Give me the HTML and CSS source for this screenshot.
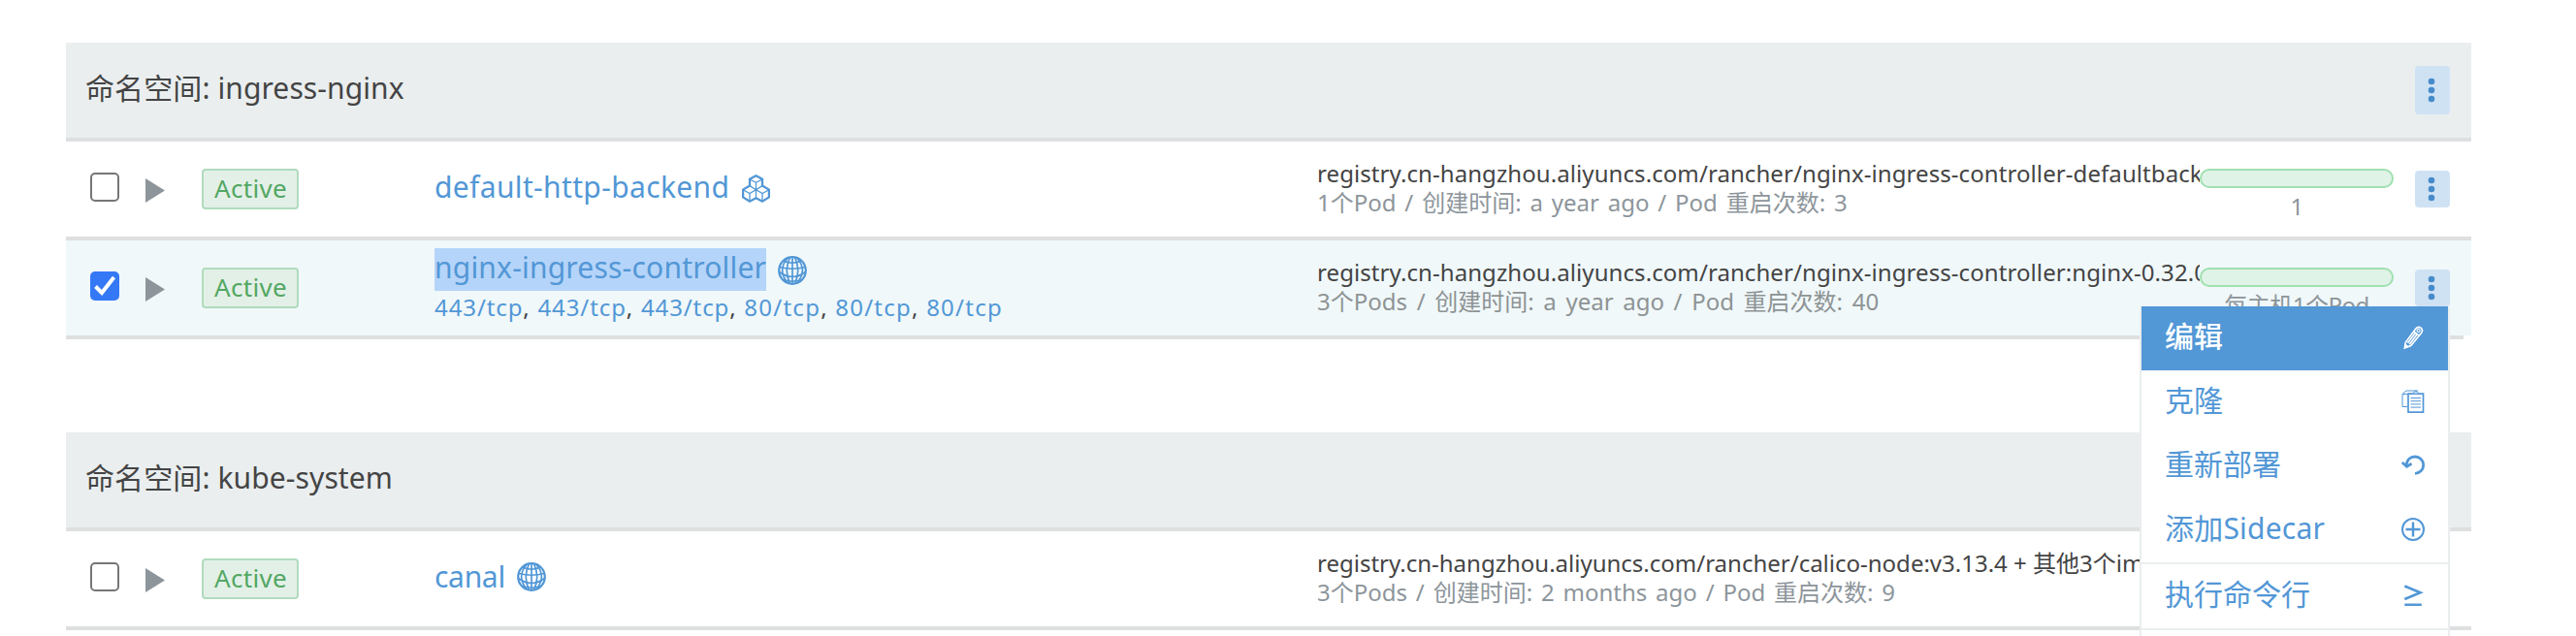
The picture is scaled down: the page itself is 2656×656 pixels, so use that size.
FILE: index.html
```html
<!DOCTYPE html>
<html lang="zh-CN">
<head>
<meta charset="utf-8">
<title>Workloads</title>
<link rel="stylesheet" href="styles.css">
</head>
<body>
<svg class="defs" aria-hidden="true">
  <symbol id="dots" viewBox="0 0 8 26"><circle cx="4" cy="4" r="3.3"/><circle cx="4" cy="13" r="3.3"/><circle cx="4" cy="22" r="3.3"/></symbol>
  <symbol id="globe" viewBox="0 0 30 30">
    <g fill="none" stroke="currentColor" stroke-width="1.7">
      <circle cx="15" cy="15" r="13.8" stroke-width="2.2"/>
      <path d="M12.5 1.500Q6 15 12.500 28.500M17.500 1.500Q24 15 17.500 28.500"/>
      <path d="M10 2.500Q-.500 14 9.500 27M20 2.500Q30.500 14 20.500 27"/>
      <path d="M15 1v28M6 5Q15 9.500 24 5M2 11.500Q15 15 28 11.500M1.500 16.500Q15 26.500 28.500 16.500M5.500 24.500Q15 28 24.500 24.500"/>
    </g>
  </symbol>
  <symbol id="cubes" viewBox="0 0 29 29">
    <path fill="none" stroke="currentColor" stroke-width="2.3" d="M14.5 1.3 21 4.8V11.6L27.9 15.6V23.4L21 27.7 14.5 24.2 8 27.7 1.1 23.4V15.6L8 11.6V4.8Z"/>
    <path fill="none" stroke="currentColor" stroke-width="1.3" d="M8 5 14.5 8.3 21 5M14.5 8.3V24M8 11.6 14.5 15.7 21 11.6M1.1 15.8 8 19.6 14.5 15.7 21 19.6 27.9 15.8M8 19.6V27M21 19.6V27"/>
  </symbol>
</svg>
<main class="page">
  <section class="group">
    <header class="group-head">
      <h2 class="group-title">命名空间: ingress-nginx</h2>
      <button class="more more-tall"><svg class="dots"><use href="#dots"/></svg></button>
    </header>
    <div class="rule"></div>
    <div class="row">
      <div class="select"><span class="check"></span><span class="arrow"></span></div>
      <div class="state"><span class="badge">Active</span></div>
      <div class="name single"><a class="link loose">default-http-backend</a><svg class="kind cubes"><use href="#cubes"/></svg></div>
      <div class="image"><p class="path">registry.cn-hangzhou.aliyuncs.com/rancher/nginx-ingress-controller-defaultbackend</p><p class="meta">1个Pod / 创建时间: a year ago / Pod 重启次数: 3</p></div>
      <div class="scale"><div class="bar"></div><p class="count">1</p></div>
      <div class="actions"><button class="more"><svg class="dots"><use href="#dots"/></svg></button></div>
    </div>
    <div class="rule"></div>
    <div class="row selected">
      <div class="select"><span class="check checked"><svg class="tick" viewBox="0 0 30 30"><path fill="none" stroke="#fff" stroke-width="4" d="M5.5 15.5 12 22 24.5 6"/></svg></span><span class="arrow"></span></div>
      <div class="state"><span class="badge">Active</span></div>
      <div class="name"><div class="name-line"><a class="link marked">nginx-ingress-controller</a><svg class="kind"><use href="#globe"/></svg></div>
        <p class="ports"><a>443/tcp</a>, <a>443/tcp</a>, <a>443/tcp</a>, <a class="short">80/tcp</a>, <a class="short">80/tcp</a>, <a class="short">80/tcp</a></p></div>
      <div class="image"><p class="path">registry.cn-hangzhou.aliyuncs.com/rancher/nginx-ingress-controller:nginx-0.32.0</p><p class="meta meta-wide">3个Pods / 创建时间: a year ago / Pod 重启次数: 40</p></div>
      <div class="scale"><div class="bar"></div><p class="count">每主机1个Pod</p></div>
      <div class="actions"><button class="more"><svg class="dots"><use href="#dots"/></svg></button>
        <ul class="menu">
          <li class="item active"><span>编辑</span>
            <svg class="icon" viewBox="0 0 24 24"><path d="M3.3 23 4.2 17.2 14.6 3.2Q17.2 0 20 2.2T20.500 7.500L9.800 20.500Z" fill="none" stroke="#fff" stroke-width="1.600"/><path d="M3 23.400 3.800 18.500 8 21.500Z" fill="#fff"/><path d="M12.500 6 18.300 10.200M6.500 17.800 14.200 7.500M8.300 19.200 16 9" stroke="#fff" stroke-width="1.600" fill="none"/><circle cx="17.600" cy="5" r="1.500" fill="none" stroke="#fff" stroke-width="1.200"/></svg></li>
          <li class="item"><span>克隆</span>
            <svg class="icon" viewBox="0 0 24 24" fill="none" stroke="currentColor"><path d="M6 17.500H1V4.500L5 1H17" stroke-width="1"/><path d="M1 4.500H6" stroke-width="1"/><path d="M7 4.200H22.500V23.200H7Z" stroke-width="1.700"/><path d="M11 4.500 12.800 2.800Q14.800-.500 16.800 2.800L18.600 4.500Z" stroke-width="1" fill="#b5d3ef"/><path d="M9.500 8.500H20M9.500 11.700H20M9.500 14.900H20M9.500 18.100H20" stroke-width="1"/></svg></li>
          <li class="item"><span>重新部署</span>
            <svg class="icon" viewBox="0 0 24 24" fill="none" stroke="currentColor"><path d="M5 12.500C5.500 6 9.500 3 14 3A8.600 8.600 0 0 1 14 20.300" stroke-width="2.800"/><path d="M.800 9 5.500 13.300 10.500 10.300" stroke-width="2.800"/></svg></li>
          <li class="item"><span class="mixed">添加Sidecar</span>
            <svg class="icon" viewBox="0 0 24 24" fill="none" stroke="currentColor" stroke-width="2"><circle cx="12" cy="12" r="11"/><path d="M12 4.500V19.500M4.500 12H19.500" stroke-width="2.400"/></svg></li>
          <li class="divider"></li>
          <li class="item"><span>执行命令行</span>
            <svg class="icon" viewBox="0 0 24 24" fill="none" stroke="currentColor" stroke-width="2.600"><path d="M3.300 2.500 19.500 9.300 3.300 16M3.300 21.800H20.800"/></svg></li>
          <li class="divider"></li>
        </ul>
      </div>
    </div>
    <div class="rule rule-short"></div>
  </section>
  <section class="group">
    <header class="group-head">
      <h2 class="group-title">命名空间: kube-system</h2>
    </header>
    <div class="rule"></div>
    <div class="row">
      <div class="select"><span class="check"></span><span class="arrow"></span></div>
      <div class="state"><span class="badge">Active</span></div>
      <div class="name single"><a class="link tight">canal</a><svg class="kind"><use href="#globe"/></svg></div>
      <div class="image"><p class="path plain">registry.cn-hangzhou.aliyuncs.com/rancher/calico-node:v3.13.4 + 其他3个images</p><p class="meta">3个Pods / 创建时间: 2 months ago / Pod 重启次数: 9</p></div>
    </div>
    <div class="rule"></div>
  </section>
</main>
</body>
</html>
```
FILE: styles.css
```css
* { box-sizing: border-box; margin: 0; padding: 0; }
html, body { height: 656px; overflow: hidden; }
body {
  background: #fff;
  color: #444;
  font: 24px/30px "Noto Sans", "Noto Sans CJK SC", sans-serif;
}
.defs { position: absolute; width: 0; height: 0; }
.page { display: flex; flex-direction: column; gap: 96px; padding: 44px 108px 0 68px; }

.group-head {
  display: flex;
  align-items: center;
  justify-content: space-between;
  height: 98px;
  padding: 0 22px 0 20px;
  background: #eaeeef;
}
.group-title { font-size: 30px; font-weight: 400; line-height: 40px; letter-spacing: .1px; padding-bottom: 4px; }
.rule { height: 4px; background: #dddfe0; }
.rule-short { margin-right: 8px; }

.row {
  display: grid;
  grid-template-columns: 140px 240px 910px 910px 200px 80px;
  height: 98px;
}
.selected { background: #f0f8fa; }

.select { display: flex; align-items: flex-start; padding: 32px 0 0 25px; gap: 27px; }
.check { width: 30px; height: 30px; border: 2px solid #767676; border-radius: 5px; background: #fff; }
.checked { border: 0; background: #3478f6; }
.tick { display: block; width: 30px; height: 30px; }
.arrow {
  width: 20px;
  height: 25px;
  margin-top: 6px;
  background: #8d959b;
  clip-path: polygon(0 0, 100% 50%, 0 100%);
}

.badge {
  display: block;
  width: 100px;
  height: 42px;
  margin-top: 28px;
  padding-left: 11px;
  border: 2px solid #b1dbbd;
  border-radius: 4px;
  background: #e3f0e7;
  color: #52a763;
  font-size: 26px;
  line-height: 37px;
  letter-spacing: .3px;
}

.name { white-space: nowrap; }
.single { display: flex; align-items: center; padding-bottom: 5px; }
.link { color: #5297d6; font-size: 30px; letter-spacing: .2px; }
.loose { letter-spacing: .35px; }
.tight { letter-spacing: -.3px; }
.kind { display: block; width: 30px; height: 30px; margin-left: 12px; color: #5297d6; overflow: visible; }
.cubes { width: 29px; height: 29px; margin-left: 13px; margin-top: 3px; }
.name-line { display: flex; align-items: flex-start; padding-top: 8px; }
.name-line .kind { margin-top: 8px; }
.marked { width: 342px; height: 44px; line-height: 40px; background: #b5d4f9; }
.ports { line-height: 34px; letter-spacing: .9px; word-spacing: .6px; }
.ports a { color: #5297d6; }
.short { letter-spacing: 1.25px; }

.image { padding-top: 18px; overflow: hidden; white-space: nowrap; }
.path { letter-spacing: .08px; }
.plain { letter-spacing: 0; }
.meta { color: #8d959b; word-spacing: 2.6px; }
.meta-wide { color: #8e9394; word-spacing: 3.4px; }

.scale { padding-top: 28px; text-align: center; }
.bar { height: 20px; border: 2px solid #a0e0b0; border-radius: 10px; background: #e0f3e7; }
.count { color: #8d959b; line-height: 38px; letter-spacing: -.5px; }

.actions { position: relative; padding: 30px 0 0 22px; }
.more {
  display: flex;
  align-items: center;
  justify-content: center;
  width: 36px;
  height: 38px;
  padding-right: 2px;
  padding-bottom: 1px;
  border: 0;
  border-radius: 4px;
  background: #cfe2f4;
}
.more-tall { height: 50px; }
.dots { display: block; width: 8px; height: 26px; fill: #478bc9; }

.menu {
  position: absolute;
  z-index: 2;
  top: 68px;
  right: 22px;
  width: 320px;
  padding-bottom: 6px;
  border: solid #eaeeef;
  border-width: 0 2px;
  background: #fff;
  list-style: none;
  color: #5297d6;
  font-size: 30px;
}
.item {
  display: flex;
  justify-content: space-between;
  height: 66px;
  padding: 0 24px 0 24px;
  line-height: 61px;
}
.mixed { letter-spacing: .2px; }
.active { background: #5297d6; color: #fff; font-weight: 500; }
.icon { width: 24px; height: 24px; margin-top: 20px; overflow: visible; }
.divider { height: 2px; background: #eaeeef; }
```
